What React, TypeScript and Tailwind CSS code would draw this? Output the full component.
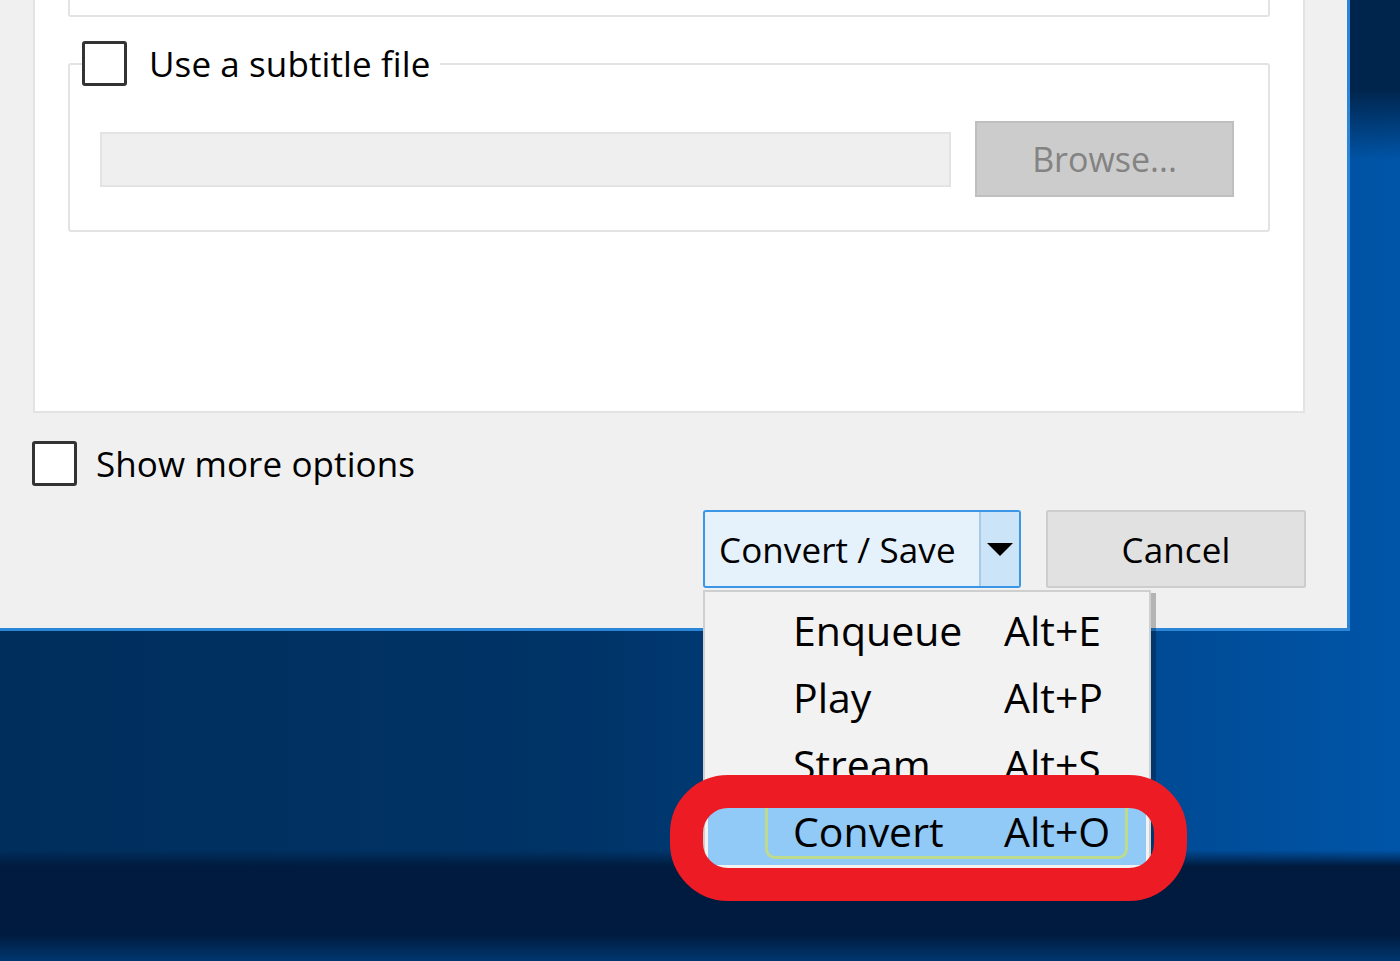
import React from 'react'

const font = { fontFamily: '"Open Sans", "Noto Sans", "Liberation Sans", sans-serif' }

function CheckBox() {
  return <span className="block w-[45px] h-[45px] shrink-0 bg-white border-[3px] border-[#333333] rounded-[3px]" />
}

function MenuItem({ label, keys, active }: { label: string; keys: string; active?: boolean }) {
  return (
    <div className={`relative flex items-center h-[67px] mx-[3px] ${active ? 'bg-[#91c9f7]' : ''}`}>
      {active && (
        <div className="absolute left-[57px] right-[18px] top-[0px] bottom-[6px] border-[3px] border-[#bddb8a] rounded-[10px]" />
      )}
      <span className="relative ml-[85px] w-[211px]">{label}</span>
      <span className="relative">{keys}</span>
    </div>
  )
}

export default function App() {
  return (
    <div
      className="relative w-[1400px] h-[961px] overflow-hidden bg-[linear-gradient(to_bottom,#00254d_0px,#00254d_90px,transparent_160px),linear-gradient(to_bottom,transparent_850px,#001b3e_866px,#001b40_935px,#00376f_961px),linear-gradient(to_right,#002e5c_0%,#003366_40%,#00458c_75%,#0055a8_100%)]"
      style={font}
    >
      {/* dialog */}
      <div className="w-[1350px] h-[631px] bg-[#f0f0f0] border-r-[3px] border-b-[3px] border-[#2b86d8] text-black text-[35px] tracking-[0.1px] leading-none">
        <div className="ml-[33px] w-[1272px] h-[413px] bg-white border-x-2 border-b-2 border-[#e3e3e3] px-[33px]">
          <div className="h-[17px] border-x-2 border-b-2 border-[#e3e3e3] rounded-b-[3px]" />

          <fieldset className="mt-[24px] border-2 border-[#e3e3e3] rounded-[3px]">
            <legend className="ml-[12px] pr-[10px] flex items-center gap-[22px]">
              <CheckBox />
              <span>Use a subtitle file</span>
            </legend>
            <div className="flex items-center gap-[24px] pl-[30px] pr-[34px] pt-[35px] pb-[33px]">
              <div className="w-[851px] h-[55px] bg-[#efefef] border-2 border-[#e3e3e3]" />
              <button className="w-[259px] h-[76px] bg-[#cccccc] border-2 border-[#bfbfbf] text-[#838383] text-[34px] tracking-normal">
                Browse...
              </button>
            </div>
          </fieldset>
        </div>

        <div className="mt-[28px] ml-[32px] flex items-center gap-[19px]">
          <CheckBox />
          <span>Show more options</span>
        </div>

        <div className="mt-[24px] pr-[41px] flex justify-end gap-[25px]">
          <div className="relative">
            <div className="flex w-[318px] h-[78px] border-2 border-[#3c96e6] rounded-[3px] bg-[#e5f1fb]">
              <span className="flex-1 flex items-center pl-[14px]">Convert / Save</span>
              <span className="w-[40px] flex items-center justify-center bg-[#cce4f7] border-l-2 border-[#a9c8e4]">
                <svg width="26" height="13" viewBox="0 0 26 13">
                  <path d="M0 0h26L13 13z" fill="#000" />
                </svg>
              </span>
            </div>

            {/* dropdown menu */}
            <div className="absolute left-0 top-full mt-[2px] w-[448px] pt-[5px] pb-[6px] bg-[#f2f2f2] border-2 border-[#cfcfcf] shadow-[5px_3px_0_rgba(0,0,0,0.25)] text-[41px] tracking-normal">
              <MenuItem label="Enqueue" keys="Alt+E" />
              <MenuItem label="Play" keys="Alt+P" />
              <MenuItem label="Stream" keys="Alt+S" />
              <MenuItem label="Convert" keys="Alt+O" active />
            </div>
          </div>

          <button className="w-[260px] h-[78px] bg-[#e1e1e1] border-2 border-[#cdcdcd] rounded-[2px]">
            Cancel
          </button>
        </div>
      </div>

      {/* red annotation ring */}
      <div className="absolute left-[670px] top-[775px] w-[517px] h-[126px] border-[33px] border-[#ed1c24] rounded-[58px]" />
    </div>
  )
}
